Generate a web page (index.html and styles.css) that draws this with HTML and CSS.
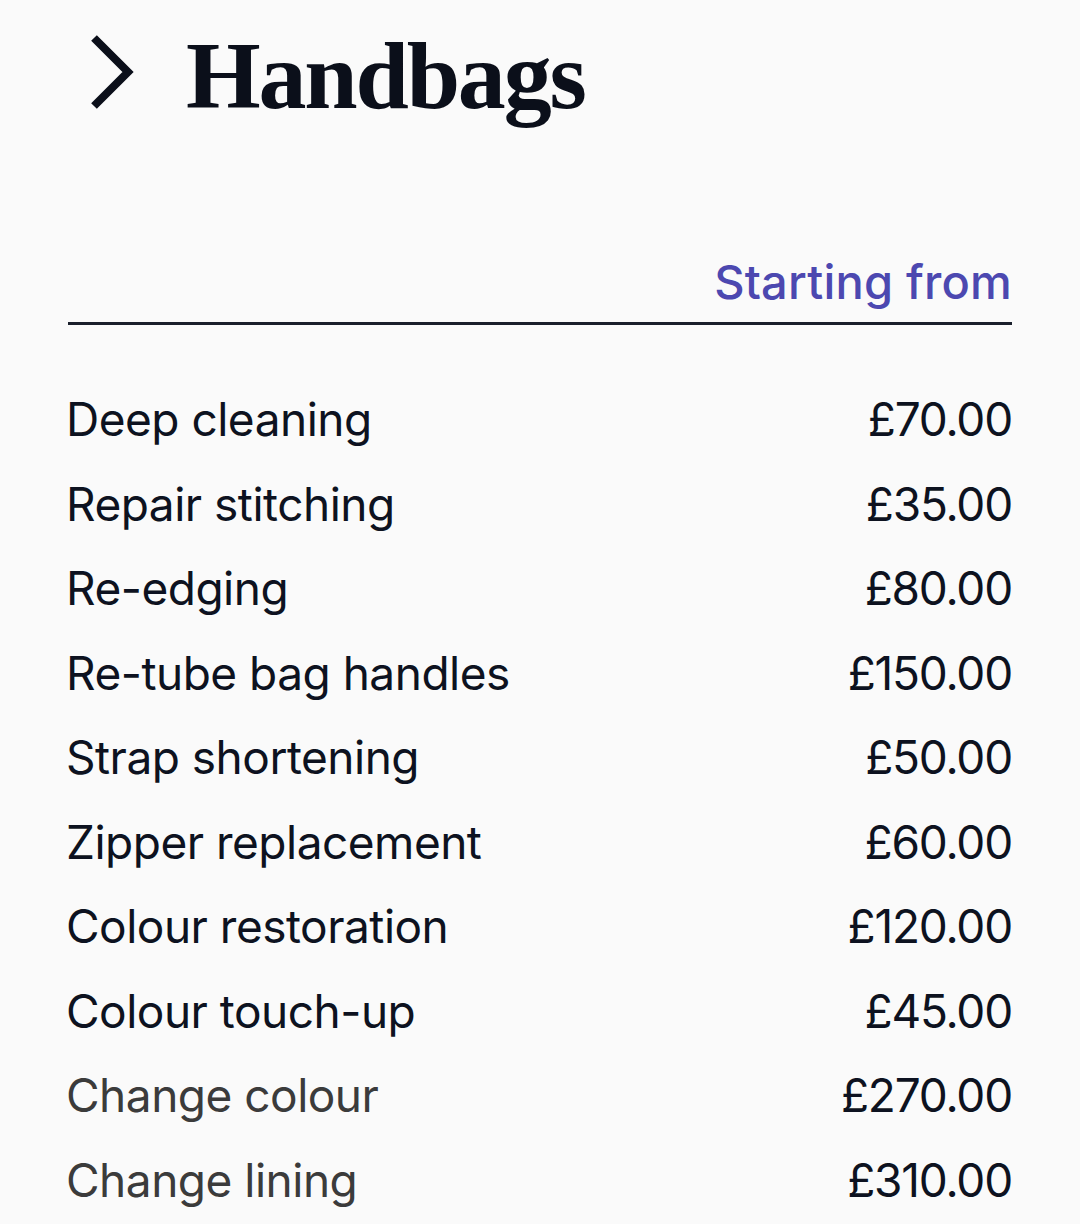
FILE: index.html
```html
<!DOCTYPE html>
<html>
<head>
<meta charset="utf-8">
<link rel="stylesheet" href="styles.css">
</head>
<body>
<div class="page">
  <header class="title">
    <svg class="chev" width="48" height="76" viewBox="0 0 48 76"><path d="M6 4 L40 38 L6 72" fill="none" stroke="#0b0f1a" stroke-width="8"/></svg>
    <h1>Handbags</h1>
  </header>
  <div class="head-row"><span>Starting from</span></div>
  <ul class="list">
    <li><span>Deep cleaning</span><span>£70.00</span></li>
    <li><span>Repair stitching</span><span>£35.00</span></li>
    <li><span>Re-edging</span><span>£80.00</span></li>
    <li><span>Re-tube bag handles</span><span>£150.00</span></li>
    <li><span>Strap shortening</span><span>£50.00</span></li>
    <li><span>Zipper replacement</span><span>£60.00</span></li>
    <li><span>Colour restoration</span><span>£120.00</span></li>
    <li><span>Colour touch-up</span><span>£45.00</span></li>
    <li class="muted"><span>Change colour</span><span>£270.00</span></li>
    <li class="muted"><span>Change lining</span><span>£310.00</span></li>
  </ul>
</div>
</body>
</html>
```
FILE: styles.css
```css
html, body { margin: 0; padding: 0; background: #fafafa; }
.page { padding: 0 68px 0 68px; font-family: Inter, "Noto Sans", sans-serif; color: #0d1220; }
.title { display: flex; align-items: center; gap: 50px; height: 150px; padding-left: 20px; }
.chev { flex: none; margin-top: -6px; }
.title h1 { margin: 0; font-family: "Liberation Serif", serif; font-weight: 700; font-size: 96px; color: #0b0f1a; letter-spacing: -2.2px; }
.head-row { display: flex; justify-content: flex-end; margin-top: 102px; border-bottom: 3px solid #1a1f2b; padding-bottom: 10px; }
.head-row span { font-size: 47px; font-weight: 500; color: #4c48b0; line-height: 60px; letter-spacing: 0.2px; }
.list { list-style: none; margin: 52px 0 0 -2px; padding: 0; }
.list li { display: flex; justify-content: space-between; align-items: center; height: 84.5px; font-size: 46px; line-height: 84px; letter-spacing: -0.5px; margin-right: -2px; }
.list li span:last-child { letter-spacing: -1.2px; margin-right: 2px; }
.list li.muted span:first-child { color: #3b3b3b; }
```
